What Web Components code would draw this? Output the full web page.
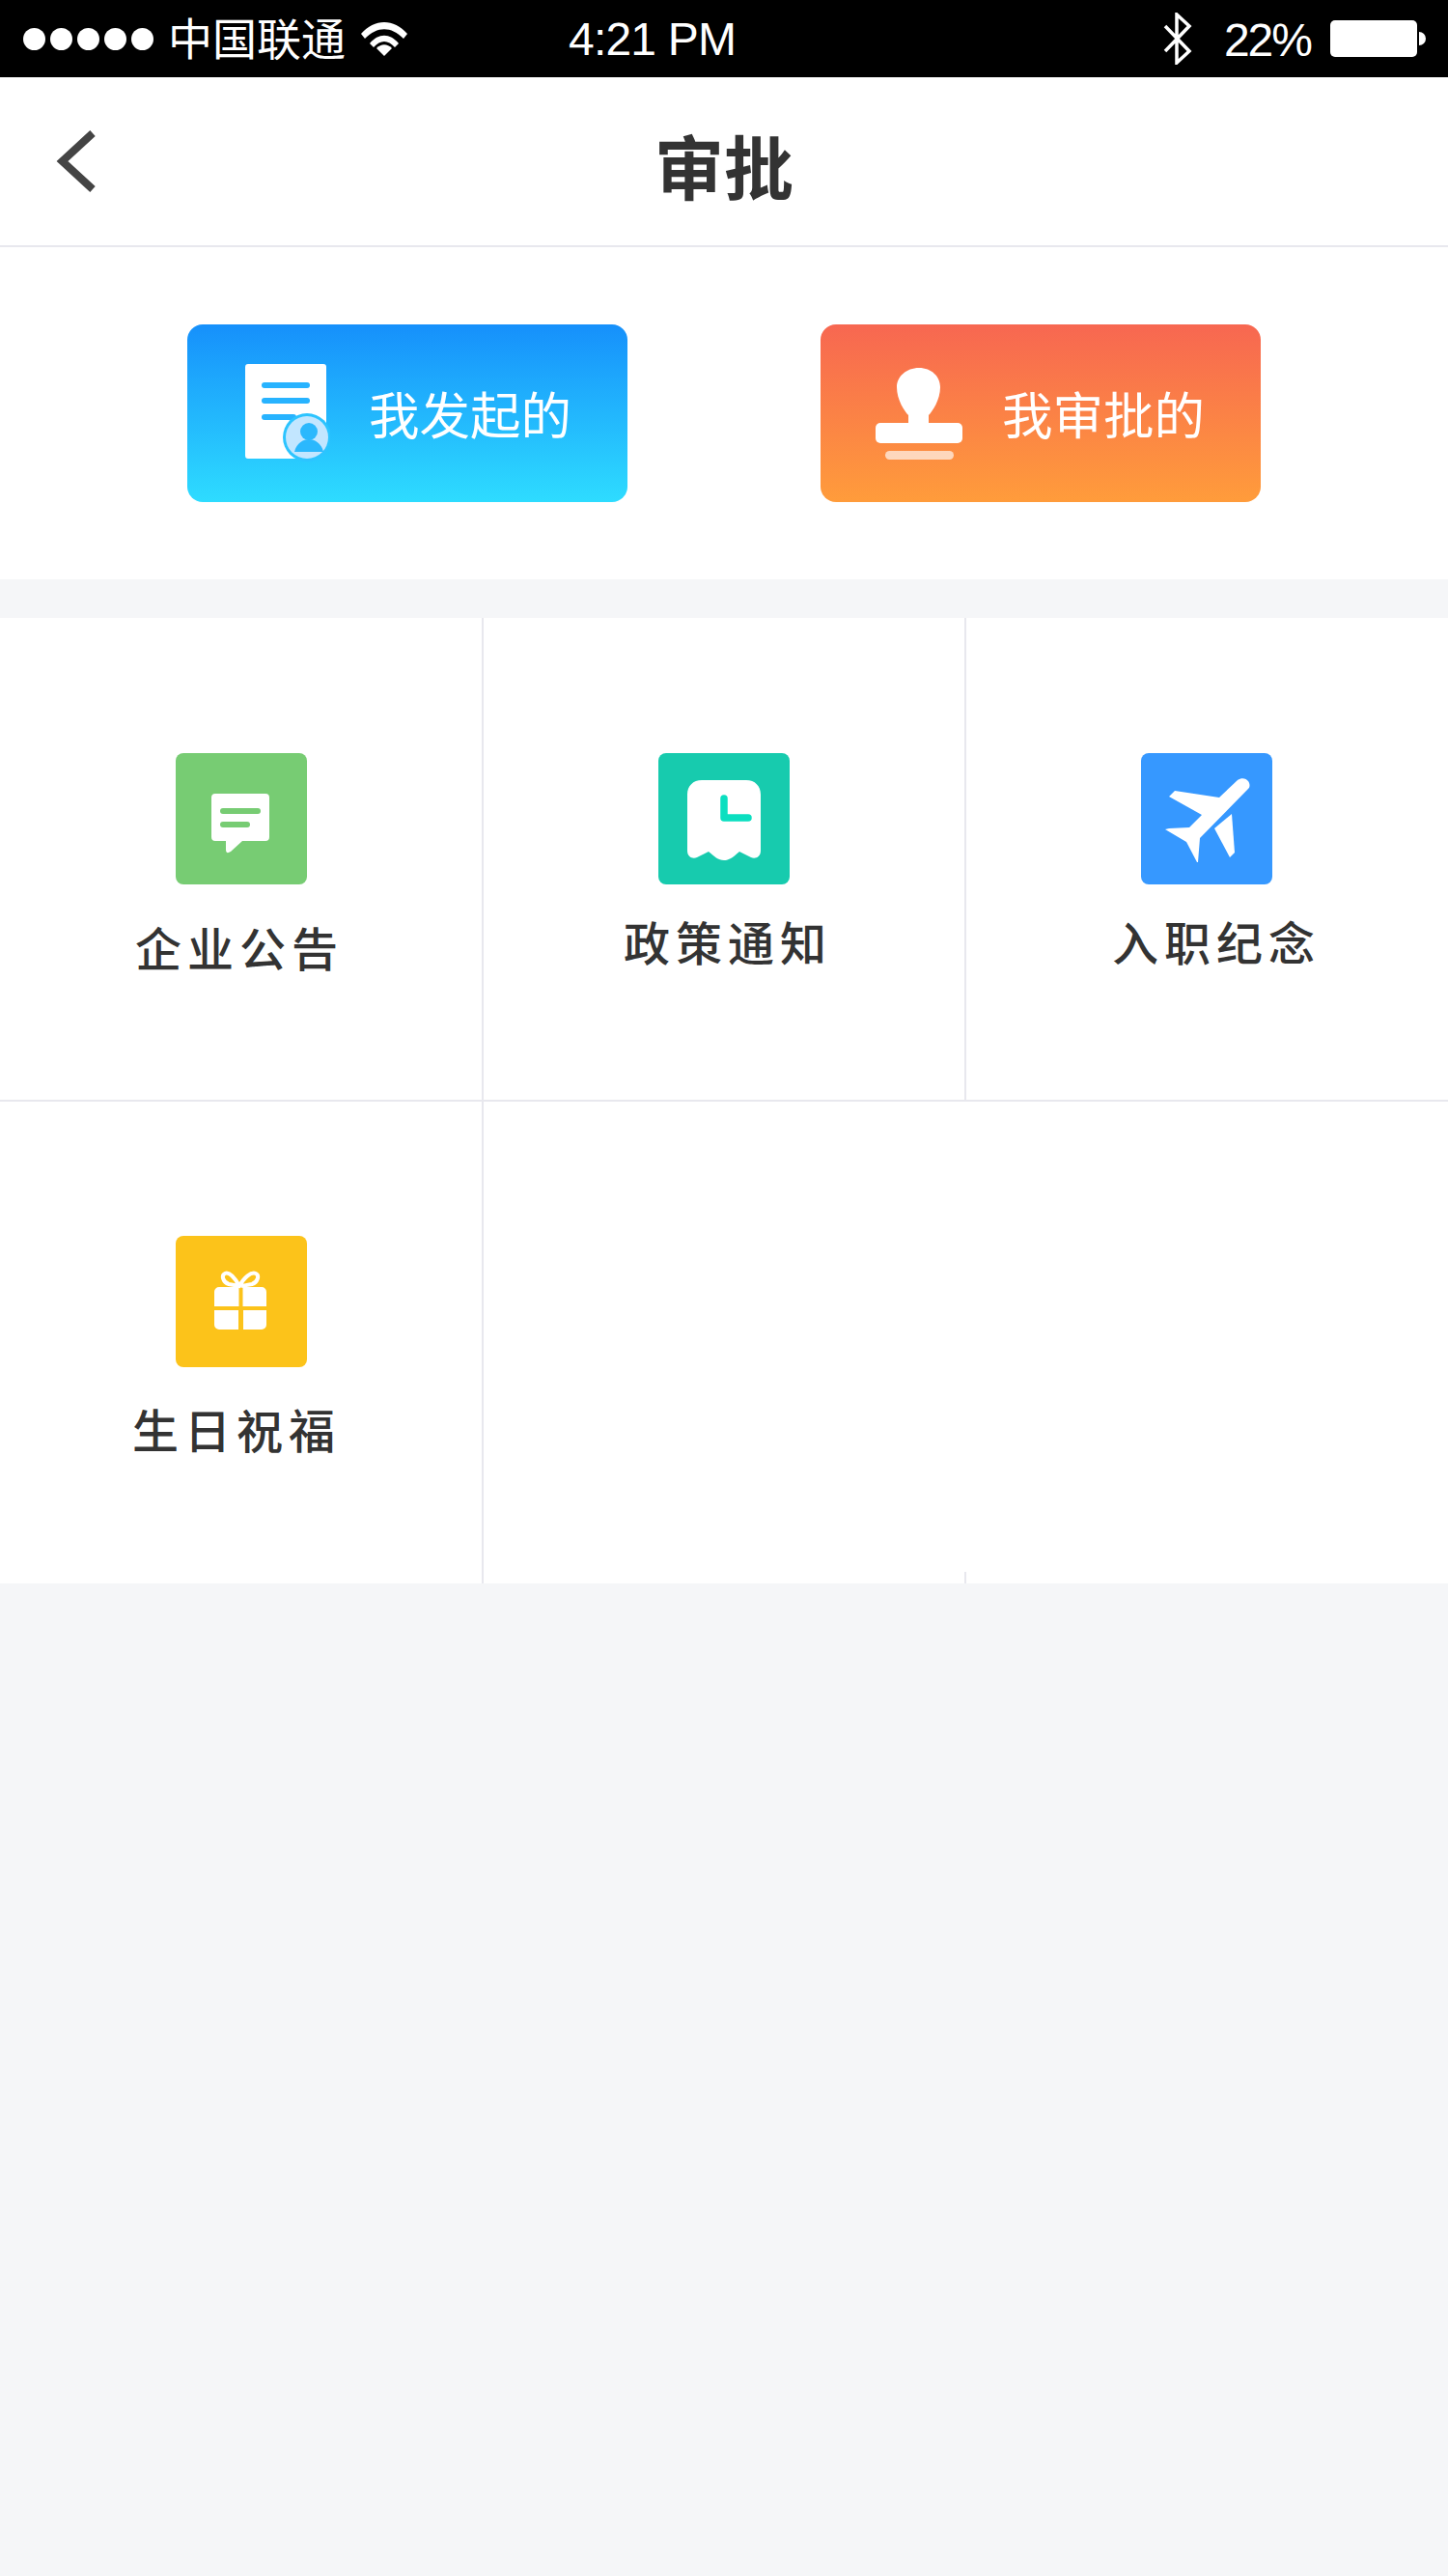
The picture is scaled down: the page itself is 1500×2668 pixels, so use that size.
<!DOCTYPE html>
<html>
<head>
<meta charset="utf-8">
<style>
html, body { margin: 0; padding: 0; background: #f5f6f8; }
body { width: 1500px; min-height: 2668px; font-family: "Noto Sans CJK SC", "Liberation Sans", sans-serif; }
</style>
</head>
<body>
<status-bar></status-bar>
<nav-bar title="审批"></nav-bar>
<action-panel>
    <action-button kind="blue" label="我发起的">
        <svg width="92" height="104" viewBox="0 0 92 104">
            <path d="M7 1 H85 a3 3 0 0 1 3 3 V70 L60 99 H7 a3 3 0 0 1 -3 -3 V4 a3 3 0 0 1 3 -3 Z" fill="#fff"/>
            <rect x="21" y="20" width="50" height="6" rx="3" fill="#27b3ff"/>
            <rect x="21" y="36" width="50" height="6" rx="3" fill="#27b3ff"/>
            <rect x="21" y="53" width="36" height="6" rx="3" fill="#27b3ff"/>
            <circle cx="68" cy="77" r="25" fill="#2cc4ff"/>
            <circle cx="68" cy="77" r="22" fill="#c2e6ff"/>
            <circle cx="70" cy="71" r="9" fill="#2bb8fd"/>
            <path d="M55 92 C57 83 64 79 70 79 C76 79 83 83 85 92 Z" fill="#2bb8fd"/>
        </svg>
    </action-button>
    <action-button kind="orange" label="我审批的">
        <svg width="92" height="104" viewBox="0 0 92 104">
            <path d="M46 5 C59 5 68 14 68 25 C68 38 60 50 56 54 L56 64 L35 64 L35 54 C31 50 23 38 23 25 C23 14 33 5 46 5 Z" fill="#fff"/>
            <rect x="1" y="62" width="90" height="21" rx="5" fill="#fff"/>
            <rect x="11" y="91" width="71" height="9" rx="4.5" fill="#fff" opacity="0.65"/>
        </svg>
    </action-button>
</action-panel>
<tile-grid>
    <grid-tile color="#77cc73" label="企业公告" offset="-2" drop="6">
        <svg width="136" height="136" viewBox="0 0 136 136">
            <path d="M41 42 H93 a4 4 0 0 1 4 4 V87 a4 4 0 0 1 -4 4 H69 L57 102 Q52 105 52 100 V91 H41 a4 4 0 0 1 -4 -4 V46 a4 4 0 0 1 4 -4 Z" fill="#fff"/>
            <rect x="46" y="57" width="42" height="6" rx="3" fill="#77cc73"/>
            <rect x="46" y="71" width="31" height="6" rx="3" fill="#77cc73"/>
        </svg>
    </grid-tile>
    <grid-tile color="#17cbae" label="政策通知" offset="4" drop="0">
        <svg width="136" height="136" viewBox="0 0 136 136">
            <path d="M45 28 H91 C100 28 106 34 106 43 V101 C106 108 100 110 96 108 L84 102 C78 107 74 111 68 111 C62 111 58 107 52 102 L40 108 C36 110 30 108 30 101 V43 C30 34 36 28 45 28 Z" fill="#fff"/>
            <path d="M68 47 V67 H93" fill="none" stroke="#0adfc0" stroke-width="7.5" stroke-linecap="round" stroke-linejoin="round"/>
        </svg>
    </grid-tile>
    <grid-tile color="#3698ff" label="入职纪念" offset="10" drop="0" last>
        <svg width="136" height="136" viewBox="0 0 136 136">
            <path d="M81 46 L100 28 C104 25 109 26 111 29 C113 32 113 35 111 37 L61 88 L59 113 L58 113 L47 92 L25 79 L29 78 L50 77 L63 64 L29 45 L35 39 Z" fill="#fff"/>
            <path d="M94 63 L97 103 L92 108 L76 78 Z" fill="#fff"/>
        </svg>
    </grid-tile>
    <grid-tile color="#fcc31a" label="生日祝福" offset="-5" drop="5">
        <svg width="136" height="136" viewBox="0 0 136 136">
            <path d="M45 53 H65.5 V73 H40 V58 a5 5 0 0 1 5 -5 Z M69.5 53 H89 a5 5 0 0 1 5 5 V73 H69.5 Z M40 77 H65 V97 H45 a5 5 0 0 1 -5 -5 Z M70 77 H94 V92 a5 5 0 0 1 -5 5 H70 Z" fill="#fff"/>
            <path d="M66 52 C61 43 55 37 51 39 C47 41 49 48 55 50 L66 52 C71 43 78 37 83 39 C87 41 85 48 79 50 L68 52" fill="none" stroke="#fff" stroke-width="4"/>
        </svg>
    </grid-tile>
    <grid-tile empty stub></grid-tile>
    <grid-tile empty last></grid-tile>
</tile-grid>

<script>
const lineColor = "#e8e8ee";

let statusTmpl = document.createElement("template");
statusTmpl.innerHTML = `
<style>
:host {
    display: flex;
    align-items: center;
    height: 80px;
    background: #000;
    color: #fff;
    padding: 0 0 0 24px;
    box-sizing: border-box;
    font-family: "Liberation Sans", sans-serif;
    font-size: 48px;
}
.dots { display: flex; gap: 5px; }
.dots i { width: 23px; height: 23px; border-radius: 50%; background: #fff; }
.carrier {
    font-family: "Noto Sans CJK SC", sans-serif;
    font-size: 46px;
    font-weight: 400;
    line-height: 60px;
    margin-left: 15px;
    position: relative;
    top: -3px;
}
.wifi { margin-left: 16px; }
.time { position: absolute; left: 589px; top: 13px; letter-spacing: -0.8px; line-height: 56px; }
.right { margin-left: auto; display: flex; align-items: center; }
.pct { margin-left: 33px; letter-spacing: -2px; position: relative; top: 1px; }
.battery { margin-left: 20px; margin-right: 23px; display: flex; align-items: center; gap: 2px; }
.battery b { width: 90px; height: 38px; background: #fff; border-radius: 5px; }
.battery u { width: 7px; height: 14px; background: #fff; border-radius: 0 7px 7px 0; }
</style>
<div class="dots"><i></i><i></i><i></i><i></i><i></i></div>
<span class="carrier">中国联通</span>
<svg class="wifi" width="48" height="36" viewBox="0 0 48 36">
    <path d="M0 13 C14 -3 34 -3 48 13 L44 18 C31 5 17 5 4 18 Z" fill="#fff"/>
    <path d="M9 23 C18 12 30 12 39 23 L35 27 C28 19 20 19 13 27 Z" fill="#fff"/>
    <path d="M16 28 C21 23 27 23 32 28 L24 36 Z" fill="#fff"/>
</svg>
<span class="time">4:21 PM</span>
<div class="right">
    <svg width="30" height="54" viewBox="0 0 30 54">
        <path d="M2 14 L27 40 L14 52 V2 L27 14 L2 40" fill="none" stroke="#fff" stroke-width="3.5"/>
    </svg>
    <span class="pct">22%</span>
    <div class="battery"><b></b><u></u></div>
</div>
`;

class StatusBar extends HTMLElement {
    constructor() {
        super();
        this.attachShadow({mode: "open"}).appendChild(statusTmpl.content.cloneNode(true));
    }
}
window.customElements.define("status-bar", StatusBar);

let navTmpl = document.createElement("template");
navTmpl.innerHTML = `
<style>
:host {
    display: flex;
    align-items: center;
    justify-content: center;
    position: relative;
    height: 176px;
    box-sizing: border-box;
    background: #fff;
    border-bottom: 2px solid ${lineColor};
}
svg { position: absolute; left: 58px; top: 54px; }
h1 {
    margin: 0;
    font-size: 72px;
    font-weight: 700;
    line-height: 100px;
    color: #333;
    position: relative;
    top: 3px;
}
</style>
<svg width="42" height="66" viewBox="0 0 42 66">
    <path d="M38 4 L6.5 33 L38 62" fill="none" stroke="#444" stroke-width="8"/>
</svg>
<h1></h1>
`;

class NavBar extends HTMLElement {
    constructor() {
        super();
        let root = this.attachShadow({mode: "open"});
        root.appendChild(navTmpl.content.cloneNode(true));
        root.querySelector("h1").textContent = this.getAttribute("title");
    }
}
window.customElements.define("nav-bar", NavBar);

let panelTmpl = document.createElement("template");
panelTmpl.innerHTML = `
<style>
:host {
    display: flex;
    gap: 200px;
    padding: 80px 194px;
    background: #fff;
    margin-bottom: 40px;
}
</style>
<slot></slot>
`;

class ActionPanel extends HTMLElement {
    constructor() {
        super();
        this.attachShadow({mode: "open"}).appendChild(panelTmpl.content.cloneNode(true));
    }
}
window.customElements.define("action-panel", ActionPanel);

let buttonTmpl = document.createElement("template");
buttonTmpl.innerHTML = `
<style>
:host {
    display: flex;
    align-items: center;
    width: 456px;
    height: 184px;
    box-sizing: border-box;
    padding-left: 56px;
    gap: 40px;
    border-radius: 16px;
    color: #fff;
    font-size: 52.5px;
    font-weight: 400;
    line-height: 60px;
}
:host([kind="blue"]) { background: linear-gradient(#1690fb, #2edcff); }
:host([kind="orange"]) { background: linear-gradient(#f76751, #ff9c3b); }
::slotted(svg) { flex: none; }
span { position: relative; top: -1px; }
</style>
<slot></slot>
<span></span>
`;

class ActionButton extends HTMLElement {
    constructor() {
        super();
        let root = this.attachShadow({mode: "open"});
        root.appendChild(buttonTmpl.content.cloneNode(true));
        root.querySelector("span").textContent = this.getAttribute("label");
    }
}
window.customElements.define("action-button", ActionButton);

let gridTmpl = document.createElement("template");
gridTmpl.innerHTML = `
<style>
:host {
    display: grid;
    grid-template-columns: 501px 500px 499px;
    grid-template-rows: 501px 499px;
    background: #fff;
}
</style>
<slot></slot>
`;

class TileGrid extends HTMLElement {
    constructor() {
        super();
        this.attachShadow({mode: "open"}).appendChild(gridTmpl.content.cloneNode(true));
    }
}
window.customElements.define("tile-grid", TileGrid);

let tileTmpl = document.createElement("template");
tileTmpl.innerHTML = `
<style>
:host {
    display: flex;
    flex-direction: column;
    align-items: center;
    position: relative;
    box-sizing: border-box;
    padding-top: 140px;
    border-right: 2px solid ${lineColor};
}
:host(:nth-child(3n+1)) { padding-left: 1px; }
:host(:nth-child(n+4)) { padding-top: 139px; }
:host(:nth-child(-n+3)) { border-bottom: 2px solid ${lineColor}; }
:host([last]) { border-right: none; padding-right: 1px; }
:host([stub]) { border-right: none; }
/* short leftover of the column line at the foot of the row */
:host([stub])::after {
    content: "";
    position: absolute;
    right: 0;
    bottom: 0;
    width: 2px;
    height: 12px;
    background: ${lineColor};
}
.tile {
    width: 136px;
    height: 136px;
    border-radius: 8px;
    overflow: hidden;
    font-size: 0;
}
.label {
    font-size: 48px;
    font-weight: 500;
    line-height: 60px;
    letter-spacing: 6px;
    color: #333;
    white-space: nowrap;
}
:host([empty]) .tile, :host([empty]) .label { display: none; }
</style>
<div class="tile"><slot></slot></div>
<div class="label"></div>
`;

class GridTile extends HTMLElement {
    constructor() {
        super();
        let root = this.attachShadow({mode: "open"});
        root.appendChild(tileTmpl.content.cloneNode(true));
        root.querySelector(".tile").style.background = this.getAttribute("color") || "none";
        let label = root.querySelector(".label");
        label.textContent = this.getAttribute("label") || "";
        // labels in the reference are not quite centred under their tile
        label.style.transform = "translateX(" + (this.getAttribute("offset") || 0) + "px)";
        label.style.marginTop = (28 + Number(this.getAttribute("drop") || 0)) + "px";
    }
}
window.customElements.define("grid-tile", GridTile);
</script>
</body>
</html>
